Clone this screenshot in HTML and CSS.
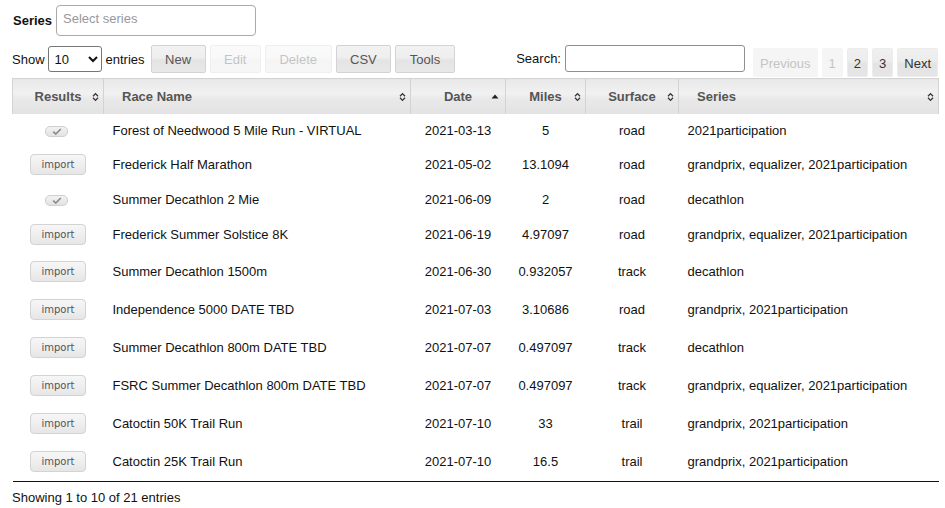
FILE: index.html
```html
<!DOCTYPE html>
<html>
<head>
<meta charset="utf-8">
<link rel="stylesheet" href="styles.css">
</head>
<body>
<div class="page">
  <div class="series-row">
    <label class="series-label">Series</label>
    <input class="series-input" type="text" placeholder="Select series">
  </div>
  <div class="toolbar">
    <div class="left-tools">
      <span>Show</span>
      <select class="len-select"><option>10</option></select>
      <span>entries</span>
      <div class="btn-group">
        <button class="ui-btn">New</button>
        <button class="ui-btn disabled">Edit</button>
        <button class="ui-btn disabled">Delete</button>
        <button class="ui-btn">CSV</button>
        <button class="ui-btn">Tools</button>
      </div>
    </div>
    <div class="search-group">
      <span>Search:</span>
      <input class="search-input" type="text">
    </div>
    <div class="paginate">
      <span class="pg disabled">Previous</span>
      <span class="pg disabled">1</span>
      <span class="pg">2</span>
      <span class="pg">3</span>
      <span class="pg">Next</span>
    </div>
  </div>
  <table class="races">
    <colgroup>
      <col class="c-res"><col class="c-name"><col class="c-date"><col class="c-miles"><col class="c-surf"><col class="c-series">
    </colgroup>
    <thead>
      <tr>
        <th><div class="thc center"><span class="lbl">Results</span><svg class="sort" width="7" height="10" viewBox="0 0 7 10"><path d="M1 4.2 L3.5 1.6 L6 4.2 M1 5.8 L3.5 8.4 L6 5.8" fill="none" stroke="#333" stroke-width="1.3"/></svg></div></th>
        <th><div class="thc left"><span class="lbl">Race Name</span><svg class="sort" width="7" height="10" viewBox="0 0 7 10"><path d="M1 4.2 L3.5 1.6 L6 4.2 M1 5.8 L3.5 8.4 L6 5.8" fill="none" stroke="#333" stroke-width="1.3"/></svg></div></th>
        <th><div class="thc center asc"><span class="lbl">Date</span><svg class="sort" width="8" height="5" viewBox="0 0 8 5"><path d="M0.5 4.5 L4 0.5 L7.5 4.5 Z" fill="#222"/></svg></div></th>
        <th><div class="thc center"><span class="lbl">Miles</span><svg class="sort" width="7" height="10" viewBox="0 0 7 10"><path d="M1 4.2 L3.5 1.6 L6 4.2 M1 5.8 L3.5 8.4 L6 5.8" fill="none" stroke="#333" stroke-width="1.3"/></svg></div></th>
        <th><div class="thc center"><span class="lbl">Surface</span><svg class="sort" width="7" height="10" viewBox="0 0 7 10"><path d="M1 4.2 L3.5 1.6 L6 4.2 M1 5.8 L3.5 8.4 L6 5.8" fill="none" stroke="#333" stroke-width="1.3"/></svg></div></th>
        <th><div class="thc left"><span class="lbl">Series</span><svg class="sort" width="7" height="10" viewBox="0 0 7 10"><path d="M1 4.2 L3.5 1.6 L6 4.2 M1 5.8 L3.5 8.4 L6 5.8" fill="none" stroke="#333" stroke-width="1.3"/></svg></div></th>
      </tr>
    </thead>
    <tbody>
      <tr class="h33"><td class="ctr"><span class="done"><svg width="10" height="7" viewBox="0 0 10 7"><path d="M1.2 3.6 L3.8 6 L8.8 1" fill="none" stroke="#8a8a8a" stroke-width="1.7"/></svg></span></td><td>Forest of Needwood 5 Mile Run - VIRTUAL</td><td class="ctr">2021-03-13</td><td class="ctr">5</td><td class="ctr">road</td><td>2021participation</td></tr>
      <tr class="h34"><td class="ctr"><button class="imp">import</button></td><td>Frederick Half Marathon</td><td class="ctr">2021-05-02</td><td class="ctr">13.1094</td><td class="ctr">road</td><td>grandprix, equalizer, 2021participation</td></tr>
      <tr class="h36"><td class="ctr"><span class="done"><svg width="10" height="7" viewBox="0 0 10 7"><path d="M1.2 3.6 L3.8 6 L8.8 1" fill="none" stroke="#8a8a8a" stroke-width="1.7"/></svg></span></td><td>Summer Decathlon 2 Mie</td><td class="ctr">2021-06-09</td><td class="ctr">2</td><td class="ctr">road</td><td>decathlon</td></tr>
      <tr class="h35"><td class="ctr"><button class="imp">import</button></td><td>Frederick Summer Solstice 8K</td><td class="ctr">2021-06-19</td><td class="ctr">4.97097</td><td class="ctr">road</td><td>grandprix, equalizer, 2021participation</td></tr>
      <tr class="h38"><td class="ctr"><button class="imp">import</button></td><td>Summer Decathlon 1500m</td><td class="ctr">2021-06-30</td><td class="ctr">0.932057</td><td class="ctr">track</td><td>decathlon</td></tr>
      <tr class="h38"><td class="ctr"><button class="imp">import</button></td><td>Independence 5000 DATE TBD</td><td class="ctr">2021-07-03</td><td class="ctr">3.10686</td><td class="ctr">road</td><td>grandprix, 2021participation</td></tr>
      <tr class="h38"><td class="ctr"><button class="imp">import</button></td><td>Summer Decathlon 800m DATE TBD</td><td class="ctr">2021-07-07</td><td class="ctr">0.497097</td><td class="ctr">track</td><td>decathlon</td></tr>
      <tr class="h38"><td class="ctr"><button class="imp">import</button></td><td>FSRC Summer Decathlon 800m DATE TBD</td><td class="ctr">2021-07-07</td><td class="ctr">0.497097</td><td class="ctr">track</td><td>grandprix, equalizer, 2021participation</td></tr>
      <tr class="h38"><td class="ctr"><button class="imp">import</button></td><td>Catoctin 50K Trail Run</td><td class="ctr">2021-07-10</td><td class="ctr">33</td><td class="ctr">trail</td><td>grandprix, 2021participation</td></tr>
      <tr class="h39 last"><td class="ctr"><button class="imp">import</button></td><td>Catoctin 25K Trail Run</td><td class="ctr">2021-07-10</td><td class="ctr">16.5</td><td class="ctr">trail</td><td>grandprix, 2021participation</td></tr>
    </tbody>
  </table>
  <div class="info">Showing 1 to 10 of 21 entries</div>
</div>
</body>
</html>
```
FILE: styles.css
```css
html, body {
  margin: 0;
  padding: 0;
  background: #fff;
}
body {
  font-family: "Liberation Sans", Arial, sans-serif;
  font-size: 13px;
  color: #111;
}
.page {
  width: 926px;
  padding-left: 12px;
}
.series-row {
  display: flex;
  align-items: center;
  padding-top: 5px;
  height: 31px;
  padding-left: 1px;
}
.series-label {
  font-weight: bold;
  margin-right: 4px;
}
.series-input {
  box-sizing: border-box;
  width: 200px;
  height: 31px;
  border: 1px solid #aaa;
  border-radius: 4px;
  padding: 0 0 4px 6px;
  font-family: "Liberation Sans", Arial, sans-serif;
  font-size: 13px;
  outline: none;
}
.series-input::placeholder {
  color: #999;
}
.toolbar {
  display: flex;
  align-items: flex-start;
  margin-top: 9px;
  height: 33px;
}
.left-tools {
  display: flex;
  align-items: center;
  height: 28px;
}
.len-select {
  box-sizing: border-box;
  width: 54px;
  height: 26px;
  margin: 0 4px 0 3px;
  border: 1px solid #767676;
  border-radius: 3px;
  background: #fff;
  font-family: "Liberation Sans", Arial, sans-serif;
  font-size: 13px;
  color: #111;
  padding: 0 2px;
}
.btn-group {
  display: flex;
  gap: 4px;
  margin-left: 6px;
}
.ui-btn {
  box-sizing: border-box;
  height: 28px;
  padding: 0 13.5px;
  border: 1px solid #d3d3d3;
  border-radius: 2px;
  background: linear-gradient(to bottom, #f2f2f2 0%, #eeeeee 45%, #e4e4e4 55%, #e8e8e8 100%);
  color: #555;
  font-family: "Liberation Sans", Arial, sans-serif;
  font-size: 13px;
}
.ui-btn.disabled {
  opacity: 0.35;
}
.search-group {
  display: flex;
  align-items: center;
  height: 27px;
  margin-left: auto;
}
.search-input {
  box-sizing: border-box;
  width: 180px;
  height: 27px;
  margin-left: 4px;
  border: 1px solid #8f8f8f;
  border-radius: 3px;
  outline: none;
}
.paginate {
  display: flex;
  gap: 4px;
  margin-top: 3px;
  margin-left: 8px;
}
.pg {
  box-sizing: border-box;
  height: 29px;
  padding: 1px 6px 0;
  display: flex;
  align-items: center;
  border: 1px solid #ececec;
  border-radius: 2px;
  background: linear-gradient(to bottom, #f0f0f0 0%, #ececec 45%, #e3e3e3 55%, #e6e6e6 100%);
  color: #333;
}
.pg.disabled {
  background: #f5f5f5;
  border-color: #f5f5f5;
  color: #c4c4c4;
}
.races {
  width: 926px;
  table-layout: fixed;
  border-collapse: collapse;
  border-spacing: 0;
}
.c-res { width: 91px; }
.c-name { width: 307px; }
.c-date { width: 95px; }
.c-miles { width: 80px; }
.c-surf { width: 93px; }
.c-series { width: 260px; }
.races th {
  height: 35px;
  padding: 0;
  border: 1px solid #d3d3d3;
  border-bottom: none;
  background: linear-gradient(to bottom, #e9e9e9 0%, #f1f1f1 40%, #e9e9e9 55%, #e3e3e3 100%);
  color: #555;
  font-weight: bold;
  font-size: 13px;
}
.thc {
  display: flex;
  align-items: center;
  padding-right: 4px;
}
.thc.center {
  padding-left: 11px;
}
.thc.center .lbl {
  flex: 1;
  text-align: center;
}
.thc.left {
  padding-left: 18px;
}
.thc.left .lbl {
  flex: 1;
  text-align: left;
}
.thc.asc {
  padding-right: 6px;
  padding-left: 14px;
}
.sort {
  flex: none;
  display: block;
}
.races td {
  padding: 0 9px;
  white-space: nowrap;
  color: #111;
}
.races td.ctr {
  text-align: center;
}
.h33 { height: 33px; }
.h34 { height: 34px; }
.h35 { height: 35px; }
.h36 { height: 36px; }
.h38 { height: 38px; }
.h39 { height: 39px; }
.races tr.last td {
  border-bottom: 1px solid #111;
}
.done {
  display: inline-flex;
  align-items: center;
  justify-content: center;
  box-sizing: border-box;
  width: 23px;
  height: 11px;
  margin-right: 3px;
  border: 1px solid #d0d0d0;
  border-radius: 5px;
  background: linear-gradient(to bottom, #f2f2f2, #e2e2e2);
  vertical-align: middle;
}
.imp {
  box-sizing: border-box;
  width: 56px;
  height: 21px;
  padding: 0;
  border: 1px solid #d3d3d3;
  border-radius: 4px;
  background: linear-gradient(to bottom, #f6f6f6 0%, #efefef 50%, #e6e6e6 100%);
  color: #555;
  font-family: "DejaVu Sans", Verdana, sans-serif;
  font-size: 10px;
  vertical-align: middle;
}
.info {
  padding-top: 8px;
}
```
